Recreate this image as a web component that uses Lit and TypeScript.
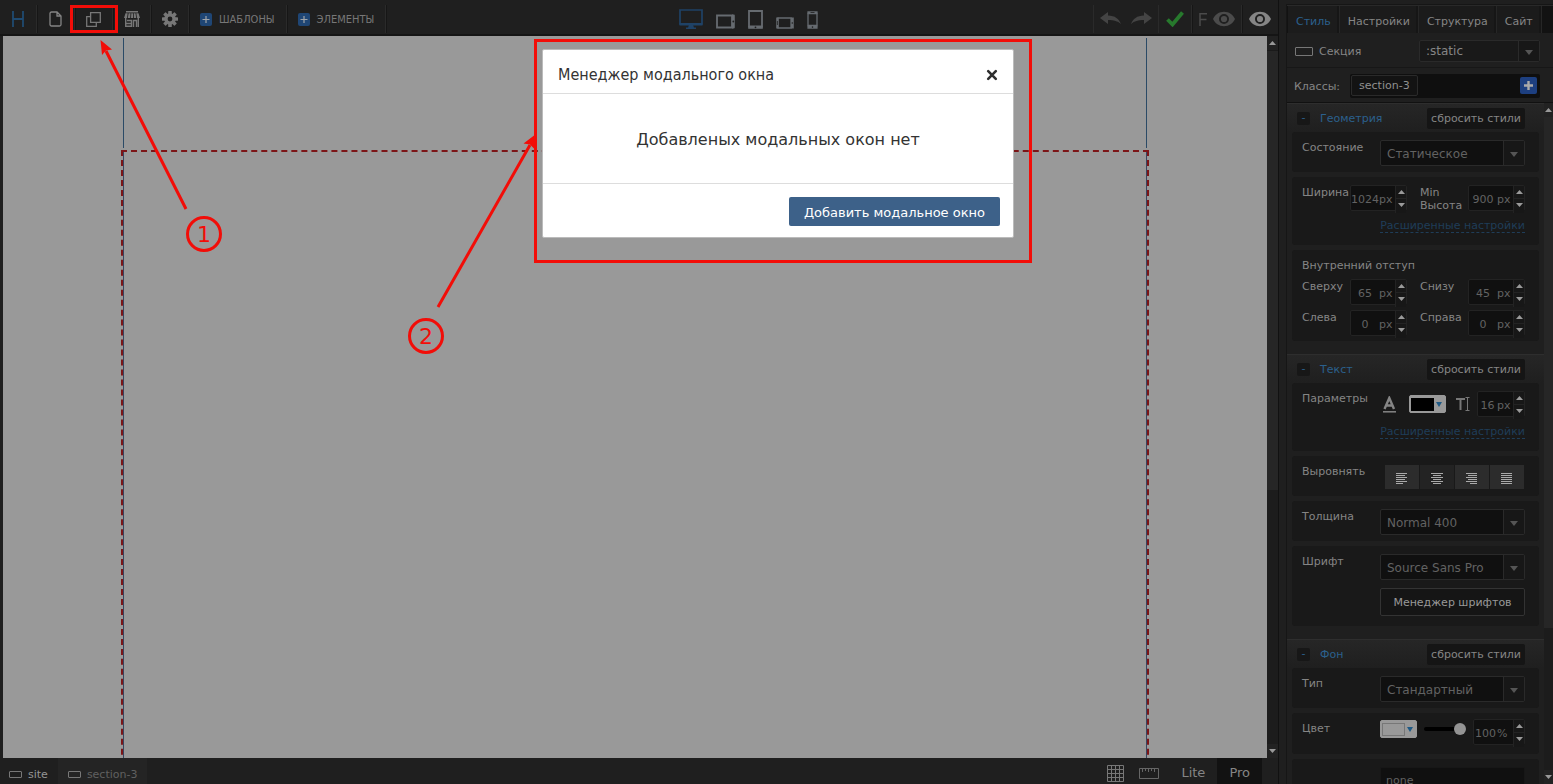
import { LitElement, html, css, svg } from "lit";
import { customElement, property } from "lit/decorators.js";
import { classMap } from "lit/directives/class-map.js";

const plusBadge = html`<svg width="12" height="13" viewBox="0 0 12 13" aria-hidden="true">
  <rect width="12" height="13" rx="2" fill="#1f4675" />
  <path d="M6 3v7M2.500 6.500h7" stroke="#a0a4a8" stroke-width="1.200" fill="none" />
</svg>`;

const frameIcon = (w: number, h: number) => html`<svg width=${w} height=${h} viewBox="0 0 ${w} ${h}" aria-hidden="true">
  <rect x=".5" y=".5" width=${w - 1} height=${h - 1} rx="0.5" fill="none" stroke="#777" />
</svg>`;

const eyeIcon = (color: string) => html`<svg width="22" height="16" viewBox="0 0 22 16" aria-hidden="true">
  <path fill=${color} fill-rule="evenodd"
    d="M11 .8C6 .8 2 3.600 0 8c2 4.400 6 7.200 11 7.200S20 12.400 22 8C20 3.600 16 .8 11 .8zM11 13a5 5 0 1 1 0-10 5 5 0 0 1 0 10zm0-1.900a3.100 3.100 0 1 0 0-6.200 3.100 3.100 0 0 0 0 6.200z" />
</svg>`;

const gearTeeth = [0, 45, 90, 135, 180, 225, 270, 315].map(
  (a) => svg`<rect x="6.200" y="0" width="3.600" height="4" rx=".6" transform="rotate(${a} 8 8)" fill="#777" />`
);

const up = html`<svg width="7" height="4" viewBox="0 0 7 4" aria-hidden="true"><path d="M0 4L3.500 0L7 4z" fill="currentColor" /></svg>`;
const down = html`<svg width="7" height="4" viewBox="0 0 7 4" aria-hidden="true"><path d="M0 0L3.500 4L7 0z" fill="currentColor" /></svg>`;
const caret = html`<svg width="6" height="5" viewBox="0 0 6 5" aria-hidden="true"><path d="M0 0h6L3 5z" fill="currentColor" /></svg>`;
const wideCaret = html`<svg width="8" height="5" viewBox="0 0 8 5" aria-hidden="true"><path d="M0 0h8L4 5z" fill="currentColor" /></svg>`;

const resets = css`
  *, *::before, *::after { box-sizing: border-box; }
  svg { display: block; flex: none; }
  button, input, select {
    margin: 0; padding: 0; border: 0; background: none; color: inherit;
    font: inherit; border-radius: 0; outline: 0; text-align: inherit;
  }
  button { cursor: pointer; }
`;

@customElement("ui-select")
class UiSelect extends LitElement {
  @property() value = "";
  @property() label = "";
  static styles = [resets, css`
    :host { display: block; }
    .box { display: grid; grid-template-columns: 1fr 21px; height: 26px; border: 1px solid #2a2a2a; border-radius: 2px; background: #101010; }
    :host([flat]) .box { height: 22px; background: #191919; }
    select { grid-area: 1 / 1 / 2 / 3; appearance: none; font-size: 12px; color: #626262; padding: 2px 24px 0 6px; width: 100%; }
    :host([flat]) select { color: #858585; padding-top: 0; }
    .arrow { grid-area: 1 / 2; display: flex; align-items: center; justify-content: center; border-left: 1px solid #2a2a2a; background: #171717; color: #555; pointer-events: none; padding-top: 2px; z-index: 1; }
  `];
  render() {
    return html`<div class="box">
      <select aria-label=${this.label}><option>${this.value}</option></select>
      <span class="arrow">${wideCaret}</span>
    </div>`;
  }
}

@customElement("ui-spin")
class UiSpin extends LitElement {
  @property() value = "";
  @property() unit = "px";
  @property() label = "";
  static styles = [resets, css`
    :host { display: block; }
    .box { display: grid; grid-template-columns: 1fr 16px 11px; height: 26px; border: 1px solid #232323; border-radius: 2px; background: #101010; color: #626262; }
    input { width: 100%; min-width: 0; height: 24px; text-align: center; padding-top: 3px; }
    .unit { line-height: 27px; }
    .steps { display: grid; grid-template-rows: 12px 12px; background: #171717; border-left: 1px solid #232323; color: #9a9a9a; }
    .steps button { display: flex; align-items: center; justify-content: center; }
    .steps button + button { border-top: 1px solid #232323; }
  `];
  render() {
    return html`<div class="box">
      <input type="text" .value=${this.value} aria-label=${this.label} />
      <span class="unit">${this.unit}</span>
      <span class="steps">
        <button aria-label="+">${up}</button>
        <button aria-label="-">${down}</button>
      </span>
    </div>`;
  }
}

@customElement("ui-group")
class UiGroup extends LitElement {
  @property() name = "";
  static styles = [resets, css`
    :host { display: block; margin-bottom: 13px; }
    header { display: flex; align-items: center; height: 29px; padding: 0 19px 0 10px; border-top: 1px solid #2e2e2e; background: linear-gradient(#262626, #1f1f1f); }
    .fold { width: 13px; height: 13px; line-height: 12px; text-align: center; background: #171717; border-radius: 2px; color: #2b5f8a; }
    h3 { flex: 1; margin: 0 0 0 10px; font-size: 11px; font-weight: 400; color: #2b608d; }
    .reset { height: 21px; padding: 0 4px; background: #151515; border-radius: 2px; color: #858585; white-space: nowrap; }
    .cards { display: flex; flex-direction: column; gap: 5px; padding: 0 5px; }
  `];
  render() {
    return html`<header>
        <button class="fold" aria-label="Свернуть">-</button>
        <h3>${this.name}</h3>
        <button class="reset">сбросить стили</button>
      </header>
      <div class="cards"><slot></slot></div>`;
  }
}

@customElement("app-root")
class AppRoot extends LitElement {
  static styles = [resets, css`
    :host {
      display: block; position: relative; height: 100vh; overflow: hidden; background: #1f1f1f;
      font: 11px/13px "DejaVu Sans", Verdana, sans-serif; color: #858585;
    }
    .shell { display: grid; grid-template-columns: minmax(0, 1fr) 274px; height: 100%; }
    .work { display: flex; flex-direction: column; min-width: 0; min-height: 0; border-right: 1px solid #111; }

    .top { display: flex; height: 36px; flex: none; border-bottom: 2px solid #151515; padding-top: 5px; }
    .cell { display: flex; align-items: center; justify-content: center; height: 28px; width: 38px; border-right: 1px solid #2a2a2a; box-shadow: 1px 0 #161616; }
    .cell.logo { width: 37px; }
    .cell.wide { width: auto; padding: 0 11px; gap: 7px; font-family: "DejaVu Sans Condensed", "DejaVu Sans", sans-serif; font-stretch: condensed; white-space: nowrap; color: #777; }
    .devices { flex: 1; display: flex; justify-content: center; align-items: flex-end; gap: 13px; padding: 0 0 5px 18px; }
    .history { display: flex; align-items: center; height: 28px; gap: 10px; padding: 0 6px; border-left: 1px solid #2a2a2a; border-right: 1px solid #2a2a2a; }
    .cell.check { width: 33px; }
    .cell.full { width: 50px; gap: 6px; }
    .cell.view { width: 36px; border: 0; box-shadow: none; }

    .stage { flex: 1; min-height: 0; display: flex; padding-left: 3px; }
    .canvas { flex: 1; min-width: 0; overflow: hidden; background: #999; }
    .page { max-width: 1024px; margin: 0 auto; }
    .block { height: 110px; margin: 2px 0 4px; border: solid #2b4a66; border-width: 0 1px; }
    .section { min-height: 900px; outline: 2px dashed #7c1517; border: solid #3a4560; border-width: 0 1px; }
    .bar { flex: none; display: flex; flex-direction: column; width: 11px; background: #1c1c1c; color: #999; }
    .bar button { display: flex; align-items: center; justify-content: center; height: 14px; background: #222; }
    .thumb { background: #262626; }
    .bar .rest { flex: 1; }
    .stage .thumb { height: 61%; border-top: 1px solid #1a1a1a; }

    .bottom { display: flex; flex: none; height: 26px; align-items: stretch; }
    .crumb { display: flex; align-items: center; gap: 6px; padding: 6px 10px 0 9px; color: #959595; }
    .crumb.on { background: #242424; color: #606060; padding-left: 10px; }
    .tools { margin-left: auto; display: flex; align-items: center; padding-right: 16px; font-size: 13px; }
    .tools svg { margin-top: 2px; }
    .tools button { padding-top: 2px; }
    .tools .ruler { margin: 0 22px 0 15px; }
    .tools .pro { align-self: stretch; padding: 2px 12px 0; margin-left: 12px; background: #121212; }

    .side { display: flex; flex-direction: column; min-height: 0; margin: 4px 0 0 7px; border: solid #161616; border-width: 1px 0 0 1px; }
    .tabs { display: flex; height: 28px; flex: none; padding-left: 1px; background: #121212; border-top: 1px solid #292929; }
    .tabs button { padding: 3px 8px 0; background: #1b1b1b; border-right: 1px solid #262626; box-shadow: inset -2px 0 #161616; }
    .tabs button.on { color: #2b608d; background: #1c1c1c; }
    .who { display: flex; align-items: center; gap: 6px; padding: 7px 13px 5px 8px; }
    .who .name { flex: 1; padding-top: 1px; }
    .who ui-select { width: 121px; }
    .classes { display: flex; align-items: center; gap: 10px; padding: 6px 13px 5px 7px; height: 35px; border-top: 1px solid #171717; }
    .classes .list { flex: 1; display: flex; align-items: center; justify-content: space-between; height: 24px; padding: 0 3px 0 1px; background: #0f0f0f; border-radius: 2px; }
    .chip { height: 21px; line-height: 19px; padding: 0 7px; border: 1px solid #2a2a2a; border-radius: 2px; background: #131313; color: #909090; }
    .classes label { padding-top: 2px; }
    .scroll { flex: 1; min-height: 0; display: flex; border-top: 1px solid #111; }
    .groups { flex: 1; min-width: 0; overflow: hidden; }
    .side .bar { width: 9px; }
    .side .thumb { height: 75%; }

    .card { background: #191919; border-radius: 3px; padding: 8px 14px 6px 10px; display: grid; grid-template-columns: 78px 1fr; align-items: start; }
    .card .cap { padding-top: 1px; }
    .card.pair { grid-template-columns: 48px 57px 61px 57px; row-gap: 5px; padding-bottom: 5px; }
    .card.pair .key { padding-top: 1px; }
    .card.pair .second { padding-left: 13px; }
    .card.pair .cap, .card .more { grid-column: 1 / -1; }
    .card .more { justify-self: end; margin: 9px 0 6px; color: #1f3d58; text-decoration: none; border-bottom: 1px dashed #1f3d58; line-height: 12px; }
    .card.pair .more { margin: 3px 0 7px; }
    .card.pair .cap { padding: 1px 0 2px; }
    .card.tall { padding-bottom: 10px; }
    .card.paint { padding: 6px 14px 9px 10px; }
    .card.paint .cap { padding-top: 3px; }
    .line { display: flex; align-items: center; justify-content: space-between; height: 26px; }
    .paint .line { align-items: flex-start; }
    .paint .swatch { margin-top: 1px; }
    .paint .range { margin-top: 3px; }
    .line .size { width: 48px; }
    .line .alpha { width: 52px; }
    .swatch { display: flex; align-items: center; width: 37px; height: 18px; padding: 1px 3px 1px 1px; border: 1px solid #999; border-radius: 2px; background: #999; color: #1f5a86; justify-content: space-between; }
    .swatch i { width: 23px; height: 13px; background: #000; }
    .swatch.light i { background: #999; border: 1px solid #777; }
    .aligns { display: grid; grid-template-columns: repeat(4, 1fr); gap: 1px; margin: 1px 1px 1px 5px; }
    .aligns button { height: 24px; display: flex; align-items: center; justify-content: center; background: #2c2c2c; padding-top: 4px; }
    .aligns button.on { background: #232323; }
    .fonts { display: grid; gap: 8px; }
    .outlined { height: 28px; text-align: center; border: 1px solid #333; border-radius: 2px; color: #999; background: #151515; }
    .range { appearance: none; width: 42px; height: 14px; }
    .range::-webkit-slider-runnable-track { height: 4px; background: #000; border-radius: 2px; }
    .range::-webkit-slider-thumb { appearance: none; width: 12px; height: 12px; margin-top: -4px; border-radius: 50%; background: #949494; }
    .field { height: 26px; width: 100%; padding: 0 5px; background: #101010; border: 1px solid #171717; color: #626262; }

    .veil { position: absolute; inset: 0; display: flex; justify-content: center; align-items: flex-start; padding: 49px 0 0 3px; }
    .modal { width: 472px; background: #fff; border: 1px solid #bbb; border-radius: 2px; color: #333; }
    .modal header { display: flex; align-items: center; justify-content: space-between; height: 44px; padding: 6px 15px 0; border-bottom: 1px solid #ddd; }
    .modal h2 { margin: 0; font: 16px/20px "DejaVu Sans Condensed", "DejaVu Sans", sans-serif; font-stretch: condensed; }
    .modal p { margin: 0; padding: 36px 0 33px; text-align: center; font-size: 16px; line-height: 20px; }
    .modal footer { display: flex; justify-content: flex-end; padding: 13px 13px 11px; border-top: 1px solid #ddd; }
    .add { height: 29px; padding: 2px 15px 0; background: #3d6189; border-radius: 2px; color: #fff; font-size: 13px; }
    .notes { position: absolute; inset: 0; width: 100%; height: 100%; pointer-events: none; }
    .num { font-size: 22px; fill: #f20d08; text-anchor: middle; }
  `];

  private device(w: number, h: number, body: unknown, label: string) {
    return html`<button aria-label=${label}><svg width=${w} height=${h} viewBox="0 0 ${w} ${h}">${body}</svg></button>`;
  }

  private alignIcon(kind: number) {
    const widths = kind === 1 ? [12, 8, 12, 8, 12, 8] : [11, 9, 11, 9, 11, 7];
    return html`<svg width="12" height="12" viewBox="0 0 12 12">${widths.map((v, i) => {
      const w = kind === 3 ? 11 : v;
      const x = kind === 1 ? (12 - w) / 2 : kind === 2 ? 11 - w : 0;
      return svg`<rect x=${x} y=${i * 2} width=${w} height="1" fill="#aaa" />`;
    })}</svg>`;
  }

  private topBar() {
    return html`<nav class="top">
      <button class="cell logo" aria-label="H"><svg width="12" height="16" viewBox="0 0 12 16"><path d="M1 0v16M11 0v16M1 8h10" stroke="#1f4a70" stroke-width="1.800" fill="none" /></svg></button>
      <button class="cell" aria-label="Страница"><svg width="13" height="16" viewBox="0 0 13 16"><path d="M2.500 1H8l4 4v8.500a1.500 1.500 0 0 1-1.500 1.500h-8A1.500 1.500 0 0 1 1 13.500v-11A1.500 1.500 0 0 1 2.500 1zM8 1v4h4" fill="none" stroke="#858585" stroke-width="1.300" /></svg></button>
      <button class="cell" aria-label="Модальные окна"><svg width="15" height="15" viewBox="0 0 15 15"><path d="M4.600 .7h9.700v9.600H4.600zM4.600 4.600H.7v9.700h9.600v-4" fill="none" stroke="#777" stroke-width="1.300" /></svg></button>
      <button class="cell" aria-label="Магазин"><svg width="16" height="16" viewBox="0 0 16 16"><path d="M2 0h12v1.500H2zM1.500 2.200h2.200L3 7H0zM4.600 2.200h1.900L6.200 7H3.800zM7.300 2.200h1.600L9.200 7H7zM9.700 2.200h1.800L12.200 7H10zM12.300 2.200h2.200L16 7h-3z" fill="#777" /><path d="M1.700 7v8.300h5.800V9.500H3M9.500 16V9.500h3V16M14.300 7v9M2 12.500h5" fill="none" stroke="#777" stroke-width="1.400" /></svg></button>
      <button class="cell" aria-label="Настройки"><svg width="16" height="16" viewBox="0 0 16 16">${gearTeeth}<circle cx="8" cy="8" r="4.100" fill="none" stroke="#777" stroke-width="3.400" /></svg></button>
      <button class="cell wide">${plusBadge}ШАБЛОНЫ</button>
      <button class="cell wide">${plusBadge}ЭЛЕМЕНТЫ</button>
      <div class="devices">
        ${this.device(24, 20, svg`<path d="M1 1h22v14H1z" fill="none" stroke="#1f4266" stroke-width="1.700" /><path d="M.5 14h23v2.500H.5zM10 16h4l1 2.500h2V20H7v-1.500h2z" fill="#1f4266" />`, "Монитор")}
        ${this.device(19, 15, svg`<path d="M1 1.500h15v12H1z" fill="none" stroke="#666b70" stroke-width="1.800" /><path d="M16 .6h2a.8.8 0 0 1 .8.8v12.200a.8.8 0 0 1-.8.800h-2z" fill="#666b70" /><circle cx="17.300" cy="7.500" r=".9" fill="#1f1f1f" />`, "Планшет горизонтально")}
        ${this.device(15, 19, svg`<path d="M1 1h13v15.500H1z" fill="none" stroke="#666b70" stroke-width="1.800" /><path d="M.2 16h14.600v2.800H.2z" fill="#666b70" /><circle cx="7.500" cy="17.300" r=".9" fill="#1f1f1f" />`, "Планшет")}
        ${this.device(18, 12, svg`<path d="M2 1h13v10H2z" fill="none" stroke="#666b70" stroke-width="1.300" /><path d="M.2.400h2.300v11.200H.2zM15 .4h2.800v11.200H15z" fill="#666b70" /><path d="M1.400 4v4" stroke="#1f1f1f" stroke-width=".8" /><circle cx="16.300" cy="6" r=".8" fill="#1f1f1f" />`, "Телефон горизонтально")}
        ${this.device(11, 18, svg`<path d="M1 2.500h9v12H1z" fill="none" stroke="#666b70" stroke-width="1.300" /><path d="M.4.300h10.200v2.500H.4zM.4 14.500h10.200v3.200H.4z" fill="#666b70" /><path d="M3.500 1.500h4" stroke="#1f1f1f" stroke-width=".8" /><circle cx="5.500" cy="16.100" r=".8" fill="#1f1f1f" />`, "Телефон")}
      </div>
      <div class="history">
        <button aria-label="Отменить"><svg width="21" height="14" viewBox="0 0 21 14"><path d="M0 6L8 0v3.500c7 0 11 3.500 13 8.500-3.500-3-7-4-13-4V12z" fill="#444" /></svg></button>
        <button aria-label="Повторить"><svg width="21" height="14" viewBox="0 0 21 14"><path d="M21 6L13 0v3.500C6 3.500 2 7 0 12c3.500-3 7-4 13-4V12z" fill="#444" /></svg></button>
      </div>
      <button class="cell check" aria-label="Сохранить"><svg width="18" height="16" viewBox="0 0 18 16"><path d="M1.500 8.500l5 5L16.500 1.500" fill="none" stroke="#27792d" stroke-width="3.800" /></svg></button>
      <button class="cell full" aria-label="F"><svg width="8" height="13" viewBox="0 0 8 13"><path d="M1 13V.7h7M1 6.500h6.500" fill="none" stroke="#4b4b4b" stroke-width="1.500" /></svg>${eyeIcon("#4b4b4b")}</button>
      <button class="cell view" aria-label="Просмотр">${eyeIcon("#858585")}</button>
    </nav>`;
  }

  private bar() {
    return html`<div class="bar"><button aria-label="Вверх">${up}</button><div class="thumb"></div><div class="rest"></div><button aria-label="Вниз">${down}</button></div>`;
  }

  private sidebar() {
    return html`<aside class="side">
      <div class="tabs">${["Стиль", "Настройки", "Структура", "Сайт"].map(
        (t, i) => html`<button class=${classMap({ on: i === 0 })}>${t}</button>`)}</div>
      <div class="who">${frameIcon(18, 9)}<span class="name">Секция</span><ui-select flat label="Состояние" value=":static"></ui-select></div>
      <div class="classes"><label for="add-class">Классы:</label>
        <div class="list"><span class="chip">section-3</span>
          <button id="add-class" aria-label="Добавить класс"><svg width="17" height="17" viewBox="0 0 17 17"><rect width="17" height="17" rx="2" fill="#1d3f80" /><path d="M8.500 4v9M4 8.500h9" stroke="#aaa" stroke-width="2.400" /></svg></button></div>
      </div>
      <div class="scroll">
        <div class="groups">
          <ui-group name="Геометрия">
            <div class="card"><span class="cap">Состояние</span><ui-select label="Состояние" value="Статическое"></ui-select></div>
            <div class="card pair"><span class="key">Ширина</span><ui-spin label="Ширина" value="1024"></ui-spin><span class="key second">Min Высота</span><ui-spin label="Min Высота" value="900"></ui-spin>
              <a class="more" href="#size">Расширенные настройки</a></div>
            <div class="card pair"><span class="cap">Внутренний отступ</span>
              <span class="key">Сверху</span><ui-spin label="Сверху" value="65"></ui-spin><span class="key second">Снизу</span><ui-spin label="Снизу" value="45"></ui-spin>
              <span class="key">Слева</span><ui-spin label="Слева" value="0"></ui-spin><span class="key second">Справа</span><ui-spin label="Справа" value="0"></ui-spin></div>
          </ui-group>
          <ui-group name="Текст">
            <div class="card"><span class="cap">Параметры</span>
              <div class="line"><svg width="24" height="17" viewBox="0 0 24 17"><path d="M4.500 13L9.300 2L14 13M6 9.500h6.500" fill="none" stroke="#858585" stroke-width="2.400" /><path d="M3 15.800h13" stroke="#858585" stroke-width="1.500" /></svg>
                <button class="swatch" aria-label="Цвет текста"><i></i>${caret}</button>
                <svg width="21" height="16" viewBox="-5 0 21 16"><path d="M0 3h9M4.500 3v11" stroke="#777" stroke-width="2" /><path d="M9.500 1.500h4M9.500 14.500h4M11.500 1v14" stroke="#777" /></svg>
                <ui-spin class="size" label="Размер" value="16"></ui-spin></div>
              <a class="more" href="#text">Расширенные настройки</a></div>
            <div class="card"><span class="cap">Выровнять</span>
              <div class="aligns">${[0, 1, 2, 3].map((k) => html`<button class=${classMap({ on: k === 1 })} aria-label="Выровнять ${k + 1}">${this.alignIcon(k)}</button>`)}</div></div>
            <div class="card"><span class="cap">Толщина</span><ui-select label="Толщина" value="Normal 400"></ui-select></div>
            <div class="card tall"><span class="cap">Шрифт</span><div class="fonts"><ui-select label="Шрифт" value="Source Sans Pro"></ui-select><button class="outlined">Менеджер шрифтов</button></div></div>
          </ui-group>
          <ui-group name="Фон">
            <div class="card"><span class="cap">Тип</span><ui-select label="Тип" value="Стандартный"></ui-select></div>
            <div class="card paint"><span class="cap">Цвет</span>
              <div class="line"><button class="swatch light" aria-label="Цвет фона"><i></i>${caret}</button>
                <input class="range" type="range" value="100" aria-label="Прозрачность" />
                <ui-spin class="alpha" label="Прозрачность" value="100" unit="%"></ui-spin></div></div>
            <div class="card"><span class="cap"></span><input class="field" value="none" aria-label="Изображение" /></div>
          </ui-group>
        </div>
        ${this.bar()}
      </div>
    </aside>`;
  }

  render() {
    return html`<div class="shell">
        <main class="work">
          ${this.topBar()}
          <div class="stage">
            <div class="canvas"><div class="page"><div class="block"></div><div class="section"></div></div></div>
            ${this.bar()}
          </div>
          <div class="bottom">
            <button class="crumb">${frameIcon(13, 7)}site</button>
            <button class="crumb on">${frameIcon(13, 7)}section-3</button>
            <div class="tools">
              <button aria-label="Сетка"><svg width="17" height="17" viewBox="0 0 17 17"><path d="M.5.500h16v16H.500zM4.500 0v17M8.500 0v17M12.500 0v17M0 4.500h17M0 8.500h17M0 12.500h17" fill="none" stroke="#777" /></svg></button>
              <button class="ruler" aria-label="Линейка"><svg width="20" height="11" viewBox="0 0 20 11"><path d="M.5.500h19v10H.500zM3.500 1v3M6.500 1v2M9.500 1v3M12.500 1v2M15.500 1v3" fill="none" stroke="#666" /></svg></button>
              <button>Lite</button><button class="pro">Pro</button>
            </div>
          </div>
        </main>
        ${this.sidebar()}
      </div>
      <div class="veil">
        <section class="modal" role="dialog" aria-labelledby="title">
          <header><h2 id="title">Менеджер модального окна</h2>
            <button aria-label="Закрыть"><svg width="12" height="12" viewBox="0 0 12 12"><path d="M2.200 2.200l7.600 7.600M9.800 2.200L2.200 9.800" stroke="#2e2e2e" stroke-width="2.600" stroke-linecap="round" /></svg></button></header>
          <p>Добавленых модальных окон нет</p>
          <footer><button class="add">Добавить модальное окно</button></footer>
        </section>
      </div>
      <svg class="notes" aria-hidden="true">
        <g fill="none" stroke="#f20d08" stroke-width="3">
          <rect x="71.500" y="6.500" width="45" height="25" />
          <rect x="535.500" y="40.500" width="495" height="221" />
          <circle cx="204" cy="234" r="16.500" />
          <circle cx="426" cy="336" r="16.500" />
          <path d="M186 209L106 51M438 307L530 145" />
        </g>
        <path d="M100.500 40L112 49.500L106 50.500L102 55z" fill="#f20d08" />
        <path d="M536 134L534.500 149L530 144.500L523.500 143.500z" fill="#f20d08" />
        <text class="num" x="204" y="242">1</text>
        <text class="num" x="426" y="344">2</text>
      </svg>`;
  }
}
